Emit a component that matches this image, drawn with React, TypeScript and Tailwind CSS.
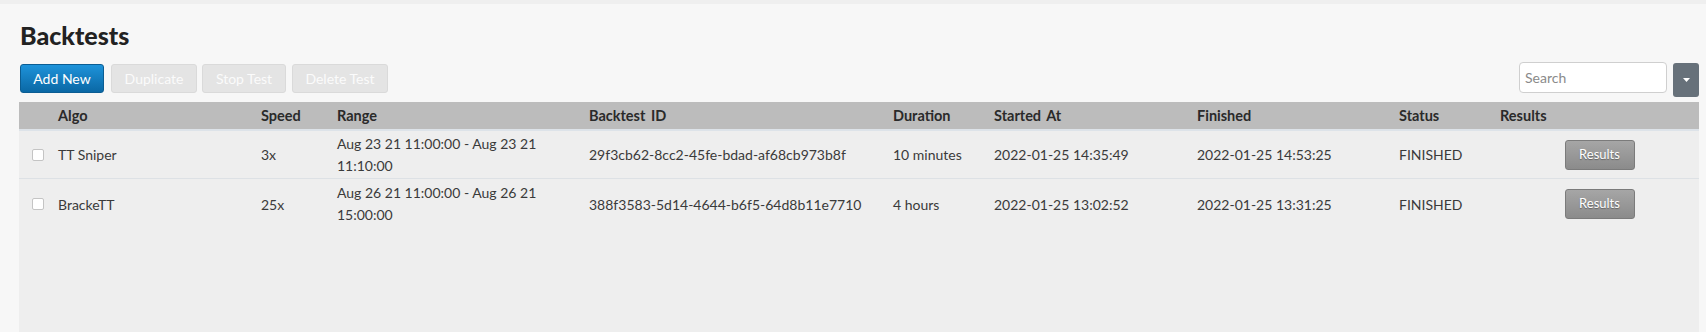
const rows = [
  {
    algo: 'TT Sniper',
    speed: '3x',
    range: 'Aug 23 21 11:00:00 - Aug 23 21 11:10:00',
    id: '29f3cb62-8cc2-45fe-bdad-af68cb973b8f',
    duration: '10 minutes',
    started: '2022-01-25 14:35:49',
    finished: '2022-01-25 14:53:25',
    status: 'FINISHED',
  },
  {
    algo: 'BrackeTT',
    speed: '25x',
    range: 'Aug 26 21 11:00:00 - Aug 26 21 15:00:00',
    id: '388f3583-5d14-4644-b6f5-64d8b11e7710',
    duration: '4 hours',
    started: '2022-01-25 13:02:52',
    finished: '2022-01-25 13:31:25',
    status: 'FINISHED',
  },
];

const cols = 'grid grid-cols-[39px_203px_76px_252px_304px_101px_203px_202px_101px_1fr]';

const App = () => {
  return (
    <div className="min-h-[332px] bg-[#f7f7f7] font-['Lato',sans-serif] text-[#3a3a3a] flex flex-col">
      <div className="h-[4px] bg-[#efefef]" />
      <div className="flex-1 flex flex-col pl-[19px] pr-[7px]">
        <h1 className="mt-[16px] pl-px text-[25px] leading-[30px] font-black text-[#222]">Backtests</h1>

        {/* Toolbar */}
        <div className="mt-[12px] flex items-start h-[35px] pl-px">
          <button className="mt-[2px] h-[29px] w-[84px] rounded-[3px] border border-[#0b5d93] bg-gradient-to-b from-[#1e93da] to-[#0a68a5] text-[14px] text-white">
            Add New
          </button>
          <button className="ml-[7px] mt-[2px] h-[29px] w-[86px] rounded-[3px] border border-[#dadada] bg-[#e4e4e4] text-[14px] text-[#fbfbfb]">
            Duplicate
          </button>
          <button className="ml-[5px] mt-[2px] h-[29px] w-[84px] rounded-[3px] border border-[#dadada] bg-[#e4e4e4] text-[14px] text-[#fbfbfb]">
            Stop Test
          </button>
          <button className="ml-[6px] mt-[2px] h-[29px] w-[96px] rounded-[3px] border border-[#dadada] bg-[#e4e4e4] text-[14px] text-[#fbfbfb]">
            Delete Test
          </button>
          <input
            placeholder="Search"
            className="ml-auto h-[31px] w-[148px] rounded-[4px] border border-[#cfcfcf] bg-white px-[5px] text-[14px] placeholder:text-[#8a8a8a] outline-none"
          />
          <button className="ml-[6px] mt-px h-[34px] w-[26px] rounded-[3px] bg-[#67717a] flex items-center justify-center">
            <svg width="7" height="4" viewBox="0 0 7 4">
              <path d="M0 0h7L3.5 4z" fill="#fff" />
            </svg>
          </button>
        </div>

        {/* Table */}
        <div className="mt-[5px] flex-1 bg-[#eeeeee] text-[14px]">
          <div className={`${cols} h-[27px] items-center bg-[#bcbcbc] text-[14.5px] font-bold text-[#2a2a2a] [word-spacing:2px] border-b-[2px] border-[#dde3e9] box-content`}>
            <div />
            <div>Algo</div>
            <div>Speed</div>
            <div>Range</div>
            <div>Backtest ID</div>
            <div>Duration</div>
            <div>Started At</div>
            <div>Finished</div>
            <div>Status</div>
            <div>Results</div>
          </div>
          {rows.map((r, i) => (
            <div
              key={r.id}
              className={`${cols} items-center ${i === 0 ? 'h-[48px] border-b border-[#dde1e5]' : 'h-[50px]'}`}
            >
              <div className="pl-[13px] flex">
                <span className="block h-[12px] w-[12px] rounded-[2px] border border-[#c4c4c4] bg-white" />
              </div>
              <div>{r.algo}</div>
              <div>{r.speed}</div>
              <div className="pr-[20px] leading-[22px]">{r.range}</div>
              <div>{r.id}</div>
              <div>{r.duration}</div>
              <div>{r.started}</div>
              <div>{r.finished}</div>
              <div>{r.status}</div>
              <div className="flex justify-center">
                <button className="h-[30px] w-[70px] rounded-[3px] border border-[#7b7b7b] bg-gradient-to-b from-[#a6a6a6] to-[#8b8b8b] text-[13px] text-white [text-shadow:0_1px_1px_rgba(0,0,0,0.35)]">
                  Results
                </button>
              </div>
            </div>
          ))}
        </div>
      </div>
    </div>
  );
};

export default App;
